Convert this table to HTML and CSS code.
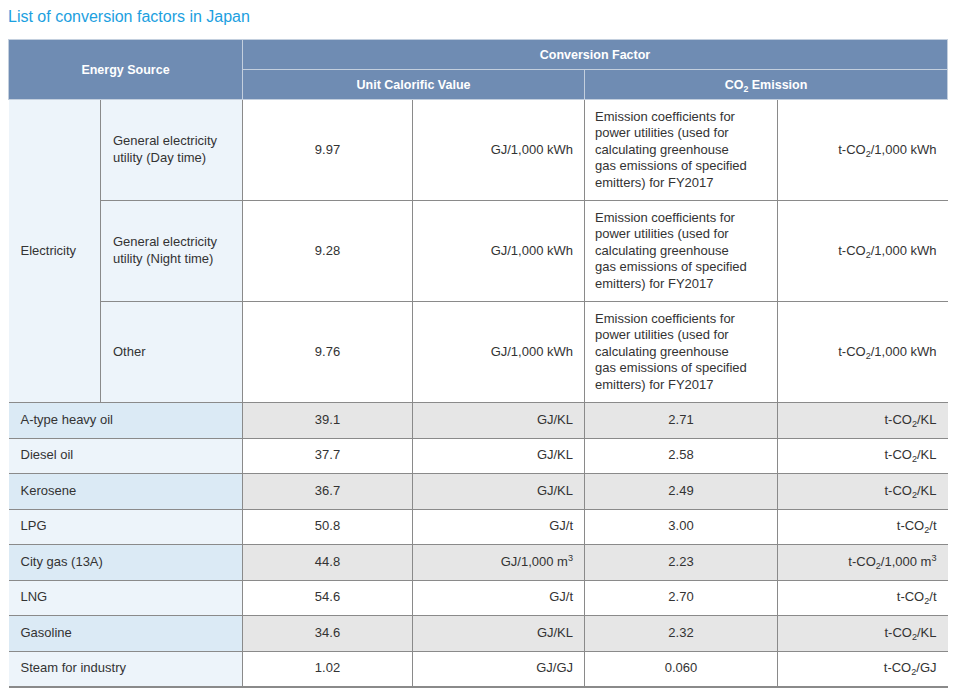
FILE: index.html
```html
<!DOCTYPE html>
<html>
<head>
<meta charset="utf-8">
<link rel="stylesheet" href="styles.css">
</head>
<body>
<div class="page">
  <h1 class="title">List of conversion factors in Japan</h1>
  <table class="tbl">
    <colgroup>
      <col class="c1"><col class="c2"><col class="c3"><col class="c4"><col class="c5"><col class="c6">
    </colgroup>
    <thead>
      <tr class="h1">
        <th colspan="2" rowspan="2">Energy Source</th>
        <th colspan="4">Conversion Factor</th>
      </tr>
      <tr class="h2">
        <th colspan="2">Unit Calorific Value</th>
        <th colspan="2">CO<sub>2</sub> Emission</th>
      </tr>
    </thead>
    <tbody>
      <tr class="el">
        <td rowspan="3" class="src elec">Electricity</td>
        <td class="src sub">General electricity utility (Day time)</td>
        <td class="val">9.97</td>
        <td class="unit">GJ/1,000 kWh</td>
        <td class="note">Emission coefficients for power utilities (used for calculating greenhouse gas emissions of specified emitters) for FY2017</td>
        <td class="unit">t-CO<sub>2</sub>/1,000 kWh</td>
      </tr>
      <tr class="el dot">
        <td class="src sub">General electricity utility (Night time)</td>
        <td class="val">9.28</td>
        <td class="unit">GJ/1,000 kWh</td>
        <td class="note">Emission coefficients for power utilities (used for calculating greenhouse gas emissions of specified emitters) for FY2017</td>
        <td class="unit">t-CO<sub>2</sub>/1,000 kWh</td>
      </tr>
      <tr class="el dot">
        <td class="src sub">Other</td>
        <td class="val">9.76</td>
        <td class="unit">GJ/1,000 kWh</td>
        <td class="note">Emission coefficients for power utilities (used for calculating greenhouse gas emissions of specified emitters) for FY2017</td>
        <td class="unit">t-CO<sub>2</sub>/1,000 kWh</td>
      </tr>
      <tr class="r gray">
        <td colspan="2" class="src">A-type heavy oil</td>
        <td class="val">39.1</td><td class="unit">GJ/KL</td>
        <td class="val">2.71</td><td class="unit">t-CO<sub>2</sub>/KL</td>
      </tr>
      <tr class="r">
        <td colspan="2" class="src">Diesel oil</td>
        <td class="val">37.7</td><td class="unit">GJ/KL</td>
        <td class="val">2.58</td><td class="unit">t-CO<sub>2</sub>/KL</td>
      </tr>
      <tr class="r gray">
        <td colspan="2" class="src">Kerosene</td>
        <td class="val">36.7</td><td class="unit">GJ/KL</td>
        <td class="val">2.49</td><td class="unit">t-CO<sub>2</sub>/KL</td>
      </tr>
      <tr class="r">
        <td colspan="2" class="src">LPG</td>
        <td class="val">50.8</td><td class="unit">GJ/t</td>
        <td class="val">3.00</td><td class="unit">t-CO<sub>2</sub>/t</td>
      </tr>
      <tr class="r gray">
        <td colspan="2" class="src">City gas (13A)</td>
        <td class="val">44.8</td><td class="unit">GJ/1,000 m<sup>3</sup></td>
        <td class="val">2.23</td><td class="unit">t-CO<sub>2</sub>/1,000 m<sup>3</sup></td>
      </tr>
      <tr class="r">
        <td colspan="2" class="src">LNG</td>
        <td class="val">54.6</td><td class="unit">GJ/t</td>
        <td class="val">2.70</td><td class="unit">t-CO<sub>2</sub>/t</td>
      </tr>
      <tr class="r gray">
        <td colspan="2" class="src">Gasoline</td>
        <td class="val">34.6</td><td class="unit">GJ/KL</td>
        <td class="val">2.32</td><td class="unit">t-CO<sub>2</sub>/KL</td>
      </tr>
      <tr class="r last">
        <td colspan="2" class="src">Steam for industry</td>
        <td class="val">1.02</td><td class="unit">GJ/GJ</td>
        <td class="val">0.060</td><td class="unit">t-CO<sub>2</sub>/GJ</td>
      </tr>
    </tbody>
  </table>
</div>
</body>
</html>
```

FILE: styles.css
```css
* { box-sizing: border-box; }
html, body { margin: 0; padding: 0; background: #fff; }
body { font-family: "Liberation Sans", Arial, sans-serif; color: #333; }
.page { padding: 7px 8px 0 8px; width: 960px; }
.title {
  margin: 0 0 12px 0;
  font-size: 16px;
  line-height: 20px;
  font-weight: normal;
  color: #1ca0e0;
}
.tbl {
  width: 939px;
  border-collapse: collapse;
  table-layout: fixed;
  font-size: 13px;
}
.c1 { width: 92px; }
.c2 { width: 142px; }
.c3 { width: 170px; }
.c4 { width: 172px; }
.c5 { width: 193px; }
.c6 { width: 170px; }
th {
  background: #6f8cb3;
  color: #fff;
  font-weight: bold;
  font-size: 12.5px;
  height: 30px;
  padding: 0;
  border: 1px solid #c3cfde;
  text-align: center;
  vertical-align: middle;
}
sub { font-size: 0.7em; vertical-align: -0.3em; line-height: 0; }
sup { font-size: 0.7em; vertical-align: 0.5em; line-height: 0; }
td {
  padding: 0 11px;
  border: 1px solid #8a8a8a;
  vertical-align: middle;
  line-height: 16.6px;
}
td:first-child { border-left: none; }
td:last-child { border-right: none; }
.el td { height: 101px; }
.el.dot td { border-top: 1px dashed #999; }
.el.dot td.elec { border-top: 1px solid #8a8a8a; }
.r td { height: 35.5px; }
.r.last td { border-bottom: 2px solid #8a8a8a; }
.src { background: #edf4fa; text-align: left; padding-left: 12px; }
.elec { border-top: none; }
.sub { padding-right: 12px; }
.val { text-align: center; }
.unit { text-align: right; padding-right: 11px; }
.note { text-align: left; padding-left: 10px; padding-right: 27px; }
.gray td { background: #e6e6e6; }
.gray td.src { background: #dbeaf5; }
```
